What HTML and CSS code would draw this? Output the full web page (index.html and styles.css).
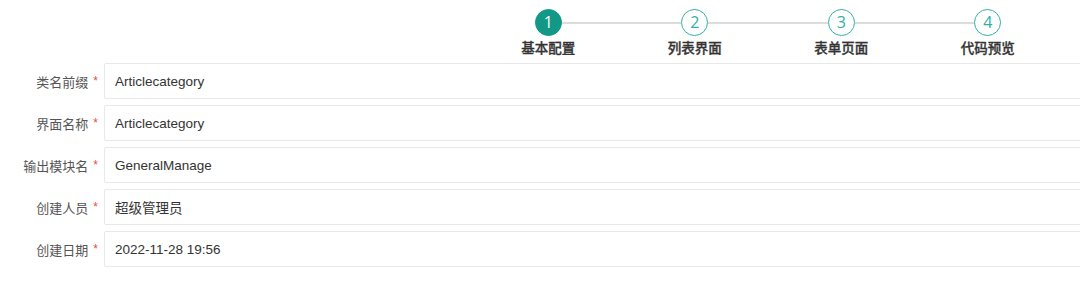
FILE: index.html
```html
<!DOCTYPE html>
<html lang="zh-CN">
<head>
    <meta charset="UTF-8">
    <meta name="viewport" content="width=device-width, initial-scale=1.0">
    <title>代码生成 - 基本配置</title>
    <link rel="stylesheet" href="styles.css">
</head>
<body>
    <div class="steps">
        <div class="step active">
            <div class="step-head"><span class="line"></span><span class="circle">1</span><span class="line"></span></div>
            <div class="step-title">基本配置</div>
        </div>
        <div class="step">
            <div class="step-head"><span class="line"></span><span class="circle">2</span><span class="line"></span></div>
            <div class="step-title">列表界面</div>
        </div>
        <div class="step">
            <div class="step-head"><span class="line"></span><span class="circle">3</span><span class="line"></span></div>
            <div class="step-title">表单页面</div>
        </div>
        <div class="step">
            <div class="step-head"><span class="line"></span><span class="circle">4</span><span class="line"></span></div>
            <div class="step-title">代码预览</div>
        </div>
    </div>

    <form class="config-form">
        <div class="form-row">
            <label>类名前缀<span class="req">*</span></label>
            <input type="text" value="Articlecategory">
        </div>
        <div class="form-row">
            <label>界面名称<span class="req">*</span></label>
            <input type="text" value="Articlecategory">
        </div>
        <div class="form-row">
            <label>输出模块名<span class="req">*</span></label>
            <input type="text" value="GeneralManage">
        </div>
        <div class="form-row">
            <label>创建人员<span class="req">*</span></label>
            <input type="text" value="超级管理员">
        </div>
        <div class="form-row">
            <label>创建日期<span class="req">*</span></label>
            <input type="text" value="2022-11-28 19:56">
        </div>
    </form>
</body>
</html>
```

FILE: styles.css
```css
body {
    font-family: "Liberation Sans", Arial, "Noto Sans CJK SC", sans-serif;
    margin: 0;
    padding: 0;
    background: #fff;
    color: #333;
    overflow: hidden;
}
.steps {
    display: flex;
    width: 586px;
    margin-left: 475px;
    padding-top: 9px;
}
.step {
    flex: 1;
    text-align: center;
}
.step-head {
    display: flex;
    align-items: center;
}
.step-head .line {
    flex: 1;
    height: 2px;
    background-color: #dcdcdc;
}
.step:first-child .step-head .line:first-child,
.step:last-child .step-head .line:last-child {
    background-color: transparent;
}
.circle {
    width: 25px;
    height: 25px;
    border: 1px solid #2fb1a2;
    border-radius: 50%;
    color: #2fb1a2;
    font-family: "Open Sans", "Liberation Sans", sans-serif;
    font-size: 16px;
    line-height: 25px;
    text-align: center;
}
.step.active .circle {
    background-color: #119886;
    border-color: #119886;
    color: #fff;
}
.step-title {
    margin-top: 3px;
    font-size: 13.5px;
    font-weight: 500;
    line-height: 20px;
    color: #333;
    -webkit-text-stroke: 0.3px #333;
}
.config-form {
    margin-top: 4px;
    width: 1110px;
}
.form-row {
    display: flex;
    align-items: center;
    margin-bottom: 6px;
}
.form-row label {
    width: 98px;
    padding-right: 6px;
    text-align: right;
    font-size: 13px;
    color: #555;
    white-space: nowrap;
}
.req {
    color: #f04848;
    font-size: 12px;
    margin-left: 5px;
    position: relative;
    top: -2px;
}
.form-row input {
    flex: 1;
    height: 36px;
    box-sizing: border-box;
    border: 1px solid #e8e8e8;
    border-radius: 2px;
    padding: 0 10px;
    font-family: "Liberation Sans", Arial, "Noto Sans CJK SC", sans-serif;
    font-size: 13.5px;
    color: #333;
    outline: none;
}
```
